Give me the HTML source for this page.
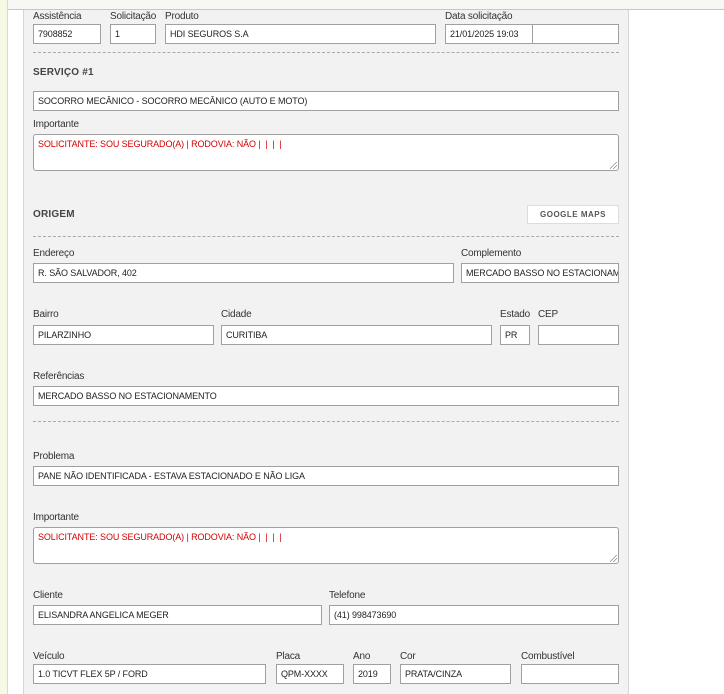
<!DOCTYPE html>
<html><head><meta charset="utf-8"><style>
*{box-sizing:border-box;margin:0;padding:0}
body{width:724px;height:694px;overflow:hidden;background:#fff;font-family:"Liberation Sans",sans-serif;position:relative}
.abs{position:absolute}
#lstrip{left:0;top:0;width:8px;height:694px;background:#f6f9e3;border-right:1px solid #d8e3a6}
#top{left:0;top:0;width:724px;height:10px;background:#f7f7f4;border-bottom:1px solid #c3d67a}
#panel{left:23px;top:10px;width:606px;height:684px;background:#f2f2f2;border-left:1px solid #d6d6d6;border-right:1px solid #d6d6d6}
.l{position:absolute;font-size:10px;color:#333;letter-spacing:-0.2px;line-height:12px}
.i{position:absolute;height:20px;background:#fff;border:1px solid #a0a0a0;font-size:9px;color:#222;padding-left:4px;line-height:18px;white-space:nowrap;overflow:hidden;letter-spacing:-0.1px}
.t{position:absolute;height:37px;background:#fff;border:1px solid #a0a0a0;border-radius:3px;font-size:9px;color:#d40000;padding:4px 4px;letter-spacing:-0.1px}
.d{position:absolute;left:33px;width:586px;border-top:1px dashed #aaa;height:0}
.h{position:absolute;font-size:10px;font-weight:bold;color:#444;letter-spacing:0.2px}
.btn{position:absolute;left:527px;top:205px;width:92px;height:19px;background:#fff;border:1px solid #ddd;font-size:8px;font-weight:bold;color:#555;text-align:center;line-height:17px;letter-spacing:0.5px}
.rz{position:absolute;right:1px;bottom:1px;width:7px;height:7px;background:linear-gradient(135deg,transparent 45%,#888 46%,#888 52%,transparent 53%,transparent 70%,#888 71%,#888 77%,transparent 78%)}
</style></head><body>
<div id="top" class="abs"></div>
<div id="lstrip" class="abs"></div>
<div id="panel" class="abs"></div>

<div class="l" style="left:33px;top:11px">Assistência</div>
<div class="l" style="left:110px;top:11px">Solicitação</div>
<div class="l" style="left:165px;top:11px">Produto</div>
<div class="l" style="left:445px;top:11px">Data solicitação</div>
<div class="i" style="left:33px;top:24px;width:68px">7908852</div>
<div class="i" style="left:110px;top:24px;width:46px">1</div>
<div class="i" style="left:165px;top:24px;width:271px">HDI SEGUROS S.A</div>
<div class="i" style="left:445px;top:24px;width:88px">21/01/2025 19:03</div>
<div class="i" style="left:532px;top:24px;width:87px"></div>
<div class="d" style="top:52px"></div>

<div class="h" style="left:33px;top:67px">SERVIÇO #1</div>
<div class="i" style="left:33px;top:91px;width:586px">SOCORRO MECÂNICO - SOCORRO MECÂNICO (AUTO E MOTO)</div>
<div class="l" style="left:33px;top:119px">Importante</div>
<div class="t" style="left:33px;top:134px;width:586px">SOLICITANTE: SOU SEGURADO(A) | RODOVIA: NÃO | &nbsp;| &nbsp;| &nbsp;|<div class="rz"></div></div>

<div class="h" style="left:33px;top:209px">ORIGEM</div>
<div class="btn">GOOGLE MAPS</div>
<div class="d" style="top:236px"></div>

<div class="l" style="left:33px;top:248px">Endereço</div>
<div class="l" style="left:461px;top:248px">Complemento</div>
<div class="i" style="left:33px;top:263px;width:421px">R. SÃO SALVADOR, 402</div>
<div class="i" style="left:461px;top:263px;width:158px">MERCADO BASSO NO ESTACIONAMENTO</div>

<div class="l" style="left:33px;top:309px">Bairro</div>
<div class="l" style="left:221px;top:309px">Cidade</div>
<div class="l" style="left:500px;top:309px">Estado</div>
<div class="l" style="left:538px;top:309px">CEP</div>
<div class="i" style="left:33px;top:325px;width:181px">PILARZINHO</div>
<div class="i" style="left:221px;top:325px;width:271px">CURITIBA</div>
<div class="i" style="left:500px;top:325px;width:30px">PR</div>
<div class="i" style="left:538px;top:325px;width:81px"></div>

<div class="l" style="left:33px;top:371px">Referências</div>
<div class="i" style="left:33px;top:386px;width:586px">MERCADO BASSO NO ESTACIONAMENTO</div>
<div class="d" style="top:421px"></div>

<div class="l" style="left:33px;top:451px">Problema</div>
<div class="i" style="left:33px;top:466px;width:586px">PANE NÃO IDENTIFICADA - ESTAVA ESTACIONADO E NÃO LIGA</div>
<div class="l" style="left:33px;top:512px">Importante</div>
<div class="t" style="left:33px;top:527px;width:586px">SOLICITANTE: SOU SEGURADO(A) | RODOVIA: NÃO | &nbsp;| &nbsp;| &nbsp;|<div class="rz"></div></div>

<div class="l" style="left:33px;top:590px">Cliente</div>
<div class="l" style="left:329px;top:590px">Telefone</div>
<div class="i" style="left:33px;top:605px;width:289px">ELISANDRA ANGELICA MEGER</div>
<div class="i" style="left:329px;top:605px;width:290px">(41) 998473690</div>

<div class="l" style="left:33px;top:651px">Veículo</div>
<div class="l" style="left:276px;top:651px">Placa</div>
<div class="l" style="left:353px;top:651px">Ano</div>
<div class="l" style="left:400px;top:651px">Cor</div>
<div class="l" style="left:521px;top:651px">Combustível</div>
<div class="i" style="left:33px;top:664px;width:233px">1.0 TICVT FLEX 5P / FORD</div>
<div class="i" style="left:276px;top:664px;width:68px">QPM-XXXX</div>
<div class="i" style="left:353px;top:664px;width:38px">2019</div>
<div class="i" style="left:400px;top:664px;width:111px">PRATA/CINZA</div>
<div class="i" style="left:521px;top:664px;width:98px"></div>
</body></html>
